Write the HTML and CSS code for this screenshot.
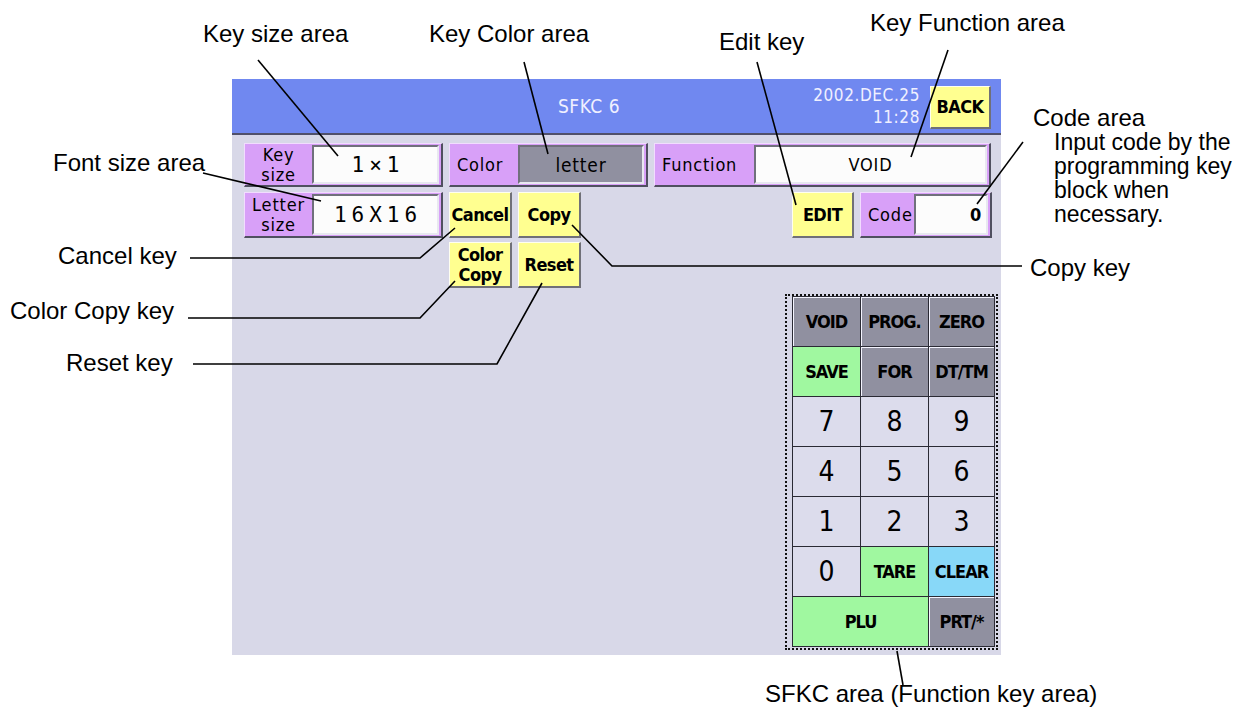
FILE: index.html
```html
<!DOCTYPE html>
<html lang="en">
<head>
  <meta charset="UTF-8" />
  <title>SFKC 6</title>
  <link rel="stylesheet" href="styles.css">
</head>
<body>
  <div class="page">
    <div class="screen">
      <div class="titlebar">
        <div class="title">SFKC 6</div>
        <div class="clock">2002.DEC.25<br>11:28</div>
        <div class="btn back">BACK</div>
      </div>

      <div class="panel">
        <div class="row">
          <div class="field w-size">
            <div class="lbl center" style="width:67px">Key<br>size</div>
            <div class="val mono">1×1</div>
          </div>
          <div class="field w-size">
            <div class="lbl" style="width:68px">Color</div>
            <div class="val grey">letter</div>
          </div>
          <div class="field w-func">
            <div class="lbl" style="width:99px">Function</div>
            <div class="val">VOID</div>
          </div>
        </div>

        <div class="row row2">
          <div class="field w-size">
            <div class="lbl center" style="width:67px">Letter<br>size</div>
            <div class="val mono">16X16</div>
          </div>
          <div class="btn small">Cancel</div>
          <div class="btn small">Copy</div>
          <div class="btn small edit">EDIT</div>
          <div class="field w-code">
            <div class="lbl" style="width:53px">Code</div>
            <div class="val right">0</div>
          </div>
        </div>

        <div class="row row3">
          <div class="btn small twoline">Color<br>Copy</div>
          <div class="btn small">Reset</div>
        </div>

        <div class="sfkc">
          <div class="keys">
            <div class="k grey word">VOID</div>
            <div class="k grey word">PROG.</div>
            <div class="k grey word">ZERO</div>
            <div class="k green word">SAVE</div>
            <div class="k grey word">FOR</div>
            <div class="k grey word">DT/TM</div>
            <div class="k">7</div>
            <div class="k">8</div>
            <div class="k">9</div>
            <div class="k">4</div>
            <div class="k">5</div>
            <div class="k">6</div>
            <div class="k">1</div>
            <div class="k">2</div>
            <div class="k">3</div>
            <div class="k">0</div>
            <div class="k green word">TARE</div>
            <div class="k cyan word">CLEAR</div>
            <div class="k green word wide">PLU</div>
            <div class="k grey word">PRT/*</div>
          </div>
        </div>
      </div>
    </div>

    <!-- callouts -->
    <div class="note" style="left:203px; top:22px">Key size area</div>
    <div class="note" style="left:429px; top:22px">Key Color area</div>
    <div class="note" style="left:719px; top:30px">Edit key</div>
    <div class="note" style="left:870px; top:11px">Key Function area</div>
    <div class="note code-note" style="left:1033px; top:106px">
      Code area
      <div class="sub">Input code by the<br>programming key<br>block when<br>necessary.</div>
    </div>
    <div class="note" style="left:53px; top:151px">Font size area</div>
    <div class="note" style="left:58px; top:244px">Cancel key</div>
    <div class="note" style="left:10px; top:299px">Color Copy key</div>
    <div class="note" style="left:66px; top:351px">Reset key</div>
    <div class="note" style="left:1030px; top:256px">Copy key</div>
    <div class="note" style="left:765px; top:682px">SFKC area (Function key area)</div>

    <svg class="leaders" width="1253" height="716" viewBox="0 0 1253 716">
      <g fill="none" stroke="#000" stroke-width="1.6">
        <path d="M258 60 L338 156" />
        <path d="M524 62 L548 154" />
        <path d="M757 62 L796 205" />
        <path d="M948 50 L911 157" />
        <path d="M1023 142 L977 204" />
        <path d="M203 173 L321 201" />
        <path d="M190 258 L420 258 L455 228" />
        <path d="M188 318 L420 318 L455 281" />
        <path d="M193 364 L497 364 L542 283" />
        <path d="M1022 266 L612 266 L572 225" />
        <path d="M897 651 L903 685" />
      </g>
    </svg>
  </div>
</body>
</html>
```

FILE: styles.css
```css
/* page + screen */
* { box-sizing: border-box; }
body {
  margin: 0;
  background: #fff;
  color: #000;
  font-family: "DejaVu Sans Condensed", "DejaVu Sans", sans-serif;
  font-stretch: condensed;
}
.page {
  position: relative;
  width: 1253px; height: 716px;
  overflow: hidden;
}
.screen {
  margin: 79px 0 0 232px;
  width: 769px; height: 576px;
  background: #d8d8e8;
}

/* title bar */
.titlebar {
  height: 56px;
  background: #7088f0;
  border-bottom: 2px solid #50506a;
  display: flex; align-items: center;
  padding-right: 10px;
  color: #f0f0ff;
}
.title {
  margin-left: 326px;
  font-size: 19px;
  letter-spacing: 0.5px;
}
.clock {
  margin-left: auto; margin-right: 10px;
  text-align: right;
  font-size: 17px; line-height: 22px;
  letter-spacing: 0.6px;
}

/* buttons */
.btn {
  background: #ffff90;
  color: #000;
  border: 1px solid;
  border-color: #fffff0 #707078 #707078 #fffff0;
  border-width: 1px 2px 2px 1px;
  display: flex; align-items: center; justify-content: center;
  text-align: center;
  font-size: 18px; font-weight: bold;
  letter-spacing: -0.6px;
  line-height: 20px;
}
.back { width: 61px; height: 43px; margin-top: 2px; font-size: 18px; }
.small { width: 63px; height: 46px; }
.edit { width: 62px; margin-left: auto; }

/* panel rows */
.panel { padding: 8px 9px 0 12px; }
.row { display: flex; gap: 6px; height: 44px; }
.row2 { margin-top: 5px; height: 46px; }
.row3 { margin-top: 4px; height: 46px; padding-left: 205px; }

.field {
  background: #d8a0f8;
  border: solid;
  border-width: 1px 2px 2px 1px;
  border-color: #f2dcff #505060 #505060 #f2dcff;
  display: flex; align-items: stretch;
  padding: 1px 2px 1px 0;
}
.w-size { width: 199px; }
.w-func { width: 337px; }
.w-code { width: 132px; }
.lbl {
  flex: none;
  display: flex; align-items: center;
  padding-left: 7px;
  font-size: 18px; line-height: 20px;
  letter-spacing: 0.8px;
}
.lbl.center { justify-content: center; padding-left: 0; text-align: center; }
.val {
  flex: 1;
  background: #fcfcfc;
  border: 2px solid;
  border-color: #70707c #e8e8f0 #e8e8f0 #70707c;
  display: flex; align-items: center; justify-content: center;
  font-size: 18px;
  letter-spacing: 0.8px;
}
.val.grey { background: #9090a0; font-size: 19px; }
.val.right { justify-content: flex-end; padding-right: 4px; font-weight: bold; }
.val.mono {
  font-family: "DejaVu Sans Mono", monospace;
  font-size: 21px;
  letter-spacing: 5px;
  padding-left: 5px;
}

/* function key block */
.sfkc {
  margin: 6px 0 0 541px;
  width: 213px; height: 356px;
  border: 2px dotted #111;
  padding: 0 1px 1px 5px;
}
.keys {
  display: grid;
  grid-template-columns: 68px 68px 66px;
  grid-auto-rows: 50px;
  border-left: 1px solid #2a2a34;
  border-top: 1px solid #2a2a34;
}
.k {
  background: #dcdcec;
  border-right: 1px solid #2a2a34;
  border-bottom: 1px solid #2a2a34;
  display: flex; align-items: center; justify-content: center;
  font-size: 28px;
}
.k.word { font-size: 18px; font-weight: bold; letter-spacing: -1px; }
.k.grey { background: #9090a0; box-shadow: inset 1px 1px 0 #f4f4ff; }
.k.green { background: #a0f8a0; }
.k.cyan { background: #88d8f8; }
.k.wide { grid-column: span 2; }

/* callouts */
.note {
  position: absolute;
  font-family: "Liberation Sans", Arial, sans-serif;
  font-size: 24px; line-height: 24px;
  white-space: nowrap;
}
.code-note .sub { padding-left: 21px; font-size: 23px; line-height: 24px; }
.leaders { position: absolute; left: 0; top: 0; pointer-events: none; }
```
